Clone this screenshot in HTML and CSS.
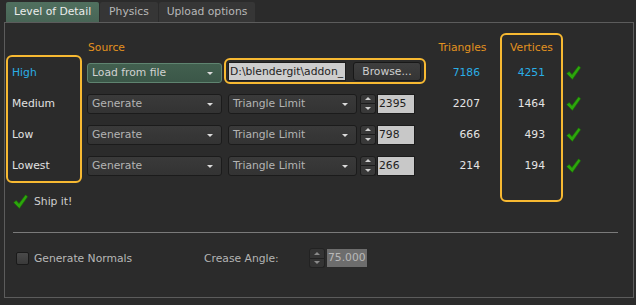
FILE: index.html
```html
<!DOCTYPE html>
<html>
<head>
<meta charset="utf-8">
<link rel="stylesheet" href="styles.css">
</head>
<body>
<div class="tabs">
  <div class="tab active">Level of Detail</div>
  <div class="tab">Physics</div>
  <div class="tab">Upload options</div>
</div>
<div class="panel">
  <div class="lod">
    <div class="col-labels">
      <div class="labels-box">
        <div class="row lbl hi">High</div>
        <div class="row lbl">Medium</div>
        <div class="row lbl">Low</div>
        <div class="row lbl">Lowest</div>
      </div>
      <div class="ship">
        <svg class="check" viewBox="0 0 15 15"><path d="M0.6 8.6 L3.2 6.4 L6 9.6 L12.6 0.8 L14.6 2.8 L6.4 14.4 Z"/></svg>
        <span>Ship it!</span>
      </div>
    </div>

    <div class="col-main">
      <div class="head">Source</div>
      <div class="row">
        <div class="dd green"><span>Load from file</span><i class="arrow"></i></div>
        <div class="filebox">
          <div class="input path">D:\blendergit\addon_</div>
          <div class="btn">Browse...</div>
        </div>
      </div>
      <div class="row">
        <div class="dd"><span>Generate</span><i class="arrow"></i></div>
        <div class="dd mode"><span>Triangle Limit</span><i class="arrow"></i></div>
        <div class="spin"><div class="up"><i></i></div><div class="down"><i></i></div></div>
        <div class="input num">2395</div>
      </div>
      <div class="row">
        <div class="dd"><span>Generate</span><i class="arrow"></i></div>
        <div class="dd mode"><span>Triangle Limit</span><i class="arrow"></i></div>
        <div class="spin"><div class="up"><i></i></div><div class="down"><i></i></div></div>
        <div class="input num">798</div>
      </div>
      <div class="row">
        <div class="dd"><span>Generate</span><i class="arrow"></i></div>
        <div class="dd mode"><span>Triangle Limit</span><i class="arrow"></i></div>
        <div class="spin"><div class="up"><i></i></div><div class="down"><i></i></div></div>
        <div class="input num">266</div>
      </div>
    </div>

    <div class="col-tri">
      <div class="head">Triangles</div>
      <div class="row val hi">7186</div>
      <div class="row val">2207</div>
      <div class="row val">666</div>
      <div class="row val">214</div>
    </div>

    <div class="col-vert">
      <div class="head">Vertices</div>
      <div class="row val hi">4251</div>
      <div class="row val">1464</div>
      <div class="row val">493</div>
      <div class="row val">194</div>
    </div>

    <div class="col-check">
      <div class="head"></div>
      <div class="row"><svg class="check" viewBox="0 0 15 15"><path d="M0.6 8.6 L3.2 6.4 L6 9.6 L12.6 0.8 L14.6 2.8 L6.4 14.4 Z"/></svg></div>
      <div class="row"><svg class="check" viewBox="0 0 15 15"><path d="M0.6 8.6 L3.2 6.4 L6 9.6 L12.6 0.8 L14.6 2.8 L6.4 14.4 Z"/></svg></div>
      <div class="row"><svg class="check" viewBox="0 0 15 15"><path d="M0.6 8.6 L3.2 6.4 L6 9.6 L12.6 0.8 L14.6 2.8 L6.4 14.4 Z"/></svg></div>
      <div class="row"><svg class="check" viewBox="0 0 15 15"><path d="M0.6 8.6 L3.2 6.4 L6 9.6 L12.6 0.8 L14.6 2.8 L6.4 14.4 Z"/></svg></div>
    </div>
  </div>

  <div class="sep"></div>

  <div class="normals">
    <div class="cb-group"><div class="cb"></div><span>Generate Normals</span></div>
    <div class="crease-label">Crease Angle:</div>
    <div class="spin disabled"><div class="up"><i></i></div><div class="down"><i></i></div></div>
    <div class="input angle">75.000</div>
  </div>
</div>
</body>
</html>
```

FILE: styles.css
```css
html, body {
  margin: 0;
  padding: 0;
  background: #2b2b2b;
  width: 636px;
  height: 305px;
  overflow: hidden;
}
body {
  font-family: "DejaVu Sans", sans-serif;
  font-size: 10.75px;
  color: #dedede;
}

.tabs {
  display: flex;
  margin-top: 2px;
  padding-left: 6px;
  height: 20px;
  gap: 1px;
}
.tab {
  box-sizing: border-box;
  height: 20px;
  line-height: 20px;
  background: #363636;
  color: #b8b8b8;
  border-radius: 2px 2px 0 0;
  text-align: center;
  white-space: nowrap;
}
.tab:nth-child(1) { width: 93px; }
.tab:nth-child(2) { width: 58px; }
.tab:nth-child(3) { width: 96px; }
.tab.active {
  background: linear-gradient(#50705f, #486556);
  color: #ececec;
}

.panel {
  margin-left: 4px;
  width: 630px;
  height: 276px;
  box-sizing: border-box;
  border: 1px solid #5c5c5c;
  padding: 10px 0 0 1px;
}

.lod {
  display: flex;
  align-items: flex-start;
}

.row {
  height: 31px;
  display: flex;
  align-items: center;
}
.head {
  height: 19px;
  line-height: 19px;
  color: #e3921f;
}

.col-labels {
  width: 76px;
  margin-top: 22px;
}
.labels-box {
  border: 2px solid #f7b932;
  border-radius: 6px;
  padding-left: 4px;
}
.lbl { color: #e2e2e2; padding-bottom: 1px; box-sizing: border-box; }
.hi { color: #2aaee6; }

.ship {
  margin-top: 11px;
  height: 15px;
  display: flex;
  align-items: center;
  padding-left: 7px;
  gap: 6px;
  color: #cfcfcf;
}

.check {
  width: 15px;
  height: 15px;
  display: block;
}
.check path {
  fill: #2ca60c;
  stroke: #1b6a07;
  stroke-width: 0.6;
}

.col-main {
  width: 339px;
  margin-left: 5px;
  padding-top: 5px;
}
.col-main .head { padding-left: 1px; }

.dd {
  position: relative;
  box-sizing: border-box;
  width: 135px;
  height: 20px;
  border: 1px solid #1b1b1b;
  border-radius: 3px;
  background: linear-gradient(#3a3a3a, #333333);
  color: #b4b4b4;
  padding-left: 4px;
  line-height: 18px;
  white-space: nowrap;
}
.dd.green {
  background: linear-gradient(#42604f, #3b5748);
  border-color: #5f8470;
  color: #d2d2d2;
}
.dd.mode {
  width: 129px;
  margin-left: 6px;
}
.arrow {
  position: absolute;
  right: 8px;
  top: 8px;
  width: 0;
  height: 0;
  border-left: 3px solid transparent;
  border-right: 3px solid transparent;
  border-top: 3px solid #dcdcdc;
}

.filebox {
  margin-left: 2px;
  margin-top: -3px;
  box-sizing: border-box;
  width: 202px;
  height: 26px;
  border: 2px solid #f7b932;
  border-radius: 6px;
  display: flex;
  align-items: center;
  padding: 0 3px 0 2px;
}
.input {
  box-sizing: border-box;
  height: 20px;
  line-height: 18px;
  background: #c8c8c8;
  border: 1px solid #1c1c1c;
  color: #1e1e1e;
  padding-left: 1px;
  white-space: nowrap;
  overflow: hidden;
}
.input.path {
  width: 118px;
  height: 19px;
  line-height: 17px;
  background: #cdcdcd;
}
.btn {
  margin-left: 7px;
  box-sizing: border-box;
  width: 68px;
  height: 19px;
  line-height: 17px;
  text-align: center;
  border: 1px solid #181818;
  border-radius: 3px;
  background: linear-gradient(#3e3e3e, #353535);
  color: #cfcfcf;
}
.input.num {
  width: 38px;
  margin-left: 1px;
}

.spin {
  margin-left: 3px;
  width: 16px;
  height: 20px;
  display: flex;
  flex-direction: column;
}
.spin > div {
  flex: 1;
  box-sizing: border-box;
  border: 1px solid #1c1c1c;
  background: #393939;
  display: flex;
  align-items: center;
  justify-content: center;
}
.spin .up { border-radius: 3px 3px 0 0; }
.spin .down { border-radius: 0 0 3px 3px; border-top: none; }
.spin .up i {
  width: 0; height: 0;
  border-left: 3px solid transparent;
  border-right: 3px solid transparent;
  border-bottom: 3px solid #d0d0d0;
}
.spin .down i {
  width: 0; height: 0;
  border-left: 3px solid transparent;
  border-right: 3px solid transparent;
  border-top: 3px solid #d0d0d0;
}
.spin.disabled > div { background: #343434; border-color: #222; }
.spin.disabled i { border-top-color: #8a8a8a; border-bottom-color: #8a8a8a; }
.spin.disabled .up i { border-top-color: transparent; }
.spin.disabled .down i { border-bottom-color: transparent; }

.col-tri {
  width: 53px;
  margin-left: 10px;
  padding-top: 5px;
}
.col-tri .head { text-align: center; }
.val {
  justify-content: flex-end;
  color: #e4e4e4;
}
.val.hi { color: #2aaee6; }
.col-tri .val { padding-right: 9px; }

.col-vert {
  box-sizing: border-box;
  width: 63px;
  margin-left: 11px;
  border: 2px solid #f7b932;
  border-radius: 6px;
  padding: 3px 0 19px;
}
.col-vert .head { text-align: center; }
.col-vert .val { padding-right: 16px; }

.col-check {
  width: 15px;
  margin-left: 3px;
  padding-top: 5px;
}

.sep {
  margin: 23px 15px 0 7px;
  height: 1px;
  background: #7a7a7a;
}

.normals {
  margin-top: 15px;
  height: 20px;
  display: flex;
  align-items: center;
  padding-left: 10px;
  color: #b8b8b8;
}
.cb-group {
  width: 188px;
  display: flex;
  align-items: center;
  gap: 5px;
}
.cb {
  box-sizing: border-box;
  width: 13px;
  height: 13px;
  border: 1px solid #1a1a1a;
  border-radius: 2px;
  background: linear-gradient(#4a4a4a, #3a3a3a);
}
.crease-label {
  width: 105px;
  color: #b4b4b4;
}
.spin.disabled { margin-left: 0; }
.input.angle {
  width: 42px;
  margin-left: 1px;
  background: #6d6d6d;
  border-color: #2a2a2a;
  color: #b8b8b8;
}
```
